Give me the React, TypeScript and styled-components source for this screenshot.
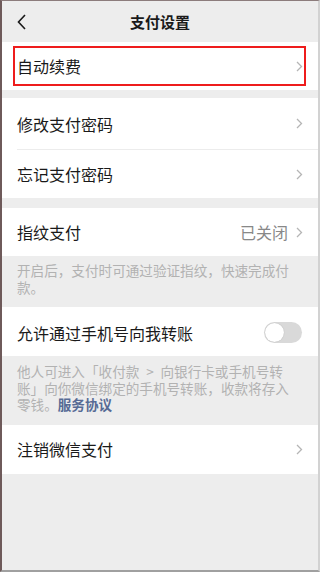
import React, { useState } from "react";
import styled, { createGlobalStyle } from "styled-components";

const GlobalStyle = createGlobalStyle`
    html, body {
        margin: 0;
        padding: 0;
        background: #ededed;
    }
    * {
        box-sizing: border-box;
    }
`;

const Frame = styled.div`
    width: 320px;
    height: 572px;
    overflow: hidden;
    display: flex;
    flex-direction: column;
    background: #ededed;
    border-left: 2px solid #6e5a5a;
    border-top: 1px solid #8c7c7c;
    border-right: 2px solid #d2d2d2;
    border-bottom: 2px solid #a0a0a0;
    font-family: "Noto Sans CJK SC", "Noto Sans", sans-serif;
    color: #1a1a1a;
`;

const Header = styled.div`
    height: 41px;
    flex-shrink: 0;
    display: flex;
    align-items: center;
    justify-content: center;
    position: relative;
    background: #ededed;
`;

const Title = styled.div`
    font-size: 15px;
    font-weight: 600;
    color: #1a1a1a;
`;

const BackButton = styled.div`
    position: absolute;
    left: 14px;
    top: 12px;
    width: 12px;
    height: 18px;
    display: flex;
`;

const Group = styled.div<{ $gap?: number }>`
    background: #fff;
    margin-top: ${(p) => p.$gap ?? 0}px;
    display: flex;
    flex-direction: column;
`;

const Row = styled.div<{ $height?: number; $highlight?: boolean; $shift?: number }>`
    height: ${(p) => p.$height ?? 48}px;
    display: flex;
    align-items: center;
    padding: ${(p) => p.$shift ?? 0}px 15px 0 15px;
    position: relative;
    font-size: 16px;
    ${(p) =>
        p.$highlight &&
        `
        &::after {
            content: "";
            position: absolute;
            left: 11px;
            right: 12px;
            top: 4px;
            bottom: 4px;
            border: 2px solid #ee1c1c;
        }
    `}
`;

const Divider = styled.div`
    height: 1px;
    margin-left: 15px;
    background: #ececec;
`;

const Label = styled.div`
    flex: 1;
`;

const Value = styled.div`
    color: #888;
    font-size: 16px;
    margin-right: 8px;
`;

const Hint = styled.div<{ $top?: number; $bottom?: number }>`
    padding: ${(p) => p.$top ?? 6}px 27px ${(p) => p.$bottom ?? 6}px 15px;
    font-size: 13.6px;
    line-height: 16.5px;
    color: #b2b2b2;
`;

const Link = styled.span`
    color: #576b95;
    font-weight: 600;
`;

const Track = styled.div<{ $on: boolean }>`
    width: 38px;
    height: 21px;
    border-radius: 11px;
    background: ${(p) => (p.$on ? "#07c160" : "#d9d9d9")};
    position: relative;
    margin-right: 1px;
    cursor: pointer;
`;

const Knob = styled.div<{ $on: boolean }>`
    position: absolute;
    top: 1px;
    left: ${(p) => (p.$on ? 18 : 1)}px;
    width: 19px;
    height: 19px;
    border-radius: 50%;
    background: #fff;
    box-shadow: 0 0 1px rgba(0, 0, 0, 0.25);
`;

const Chevron = () => (
    <svg width="7" height="11" viewBox="0 0 7 11">
        <path d="M1 1l4.5 4.5L1 10" fill="none" stroke="#b5b5b5" strokeWidth="1.3" />
    </svg>
);

export default function App() {
    const [phoneTransfer, setPhoneTransfer] = useState(false);

    return (
        <>
            <GlobalStyle />
            <Frame>
                <Header>
                    <BackButton>
                        <svg width="12" height="18" viewBox="0 0 12 18">
                            <path d="M9 2L2.5 9 9 16" fill="none" stroke="#1a1a1a" strokeWidth="1.6" />
                        </svg>
                    </BackButton>
                    <Title>支付设置</Title>
                </Header>

                <Group>
                    <Row $highlight>
                        <Label>自动续费</Label>
                        <Chevron />
                    </Row>
                </Group>

                <Group $gap={8}>
                    <Row $height={51}>
                        <Label>修改支付密码</Label>
                        <Chevron />
                    </Row>
                    <Divider />
                    <Row>
                        <Label>忘记支付密码</Label>
                        <Chevron />
                    </Row>
                </Group>

                <Group $gap={10}>
                    <Row>
                        <Label>指纹支付</Label>
                        <Value>已关闭</Value>
                        <Chevron />
                    </Row>
                </Group>
                <Hint $top={6} $bottom={12}>开启后，支付时可通过验证指纹，快速完成付款。</Hint>

                <Group>
                    <Row $height={49} $shift={2}>
                        <Label>允许通过手机号向我转账</Label>
                        <Track $on={phoneTransfer} onClick={() => setPhoneTransfer(!phoneTransfer)}>
                            <Knob $on={phoneTransfer} />
                        </Track>
                    </Row>
                </Group>
                <Hint $top={7} $bottom={12}>
                    {"他人可进入「收付款\u2002>\u2002向银行卡或手机号转账」向你微信绑定的手机号转账，收款将存入零钱。"}
                    <Link>服务协议</Link>
                </Hint>

                <Group>
                    <Row $height={49}>
                        <Label>注销微信支付</Label>
                        <Chevron />
                    </Row>
                </Group>
            </Frame>
        </>
    );
}
